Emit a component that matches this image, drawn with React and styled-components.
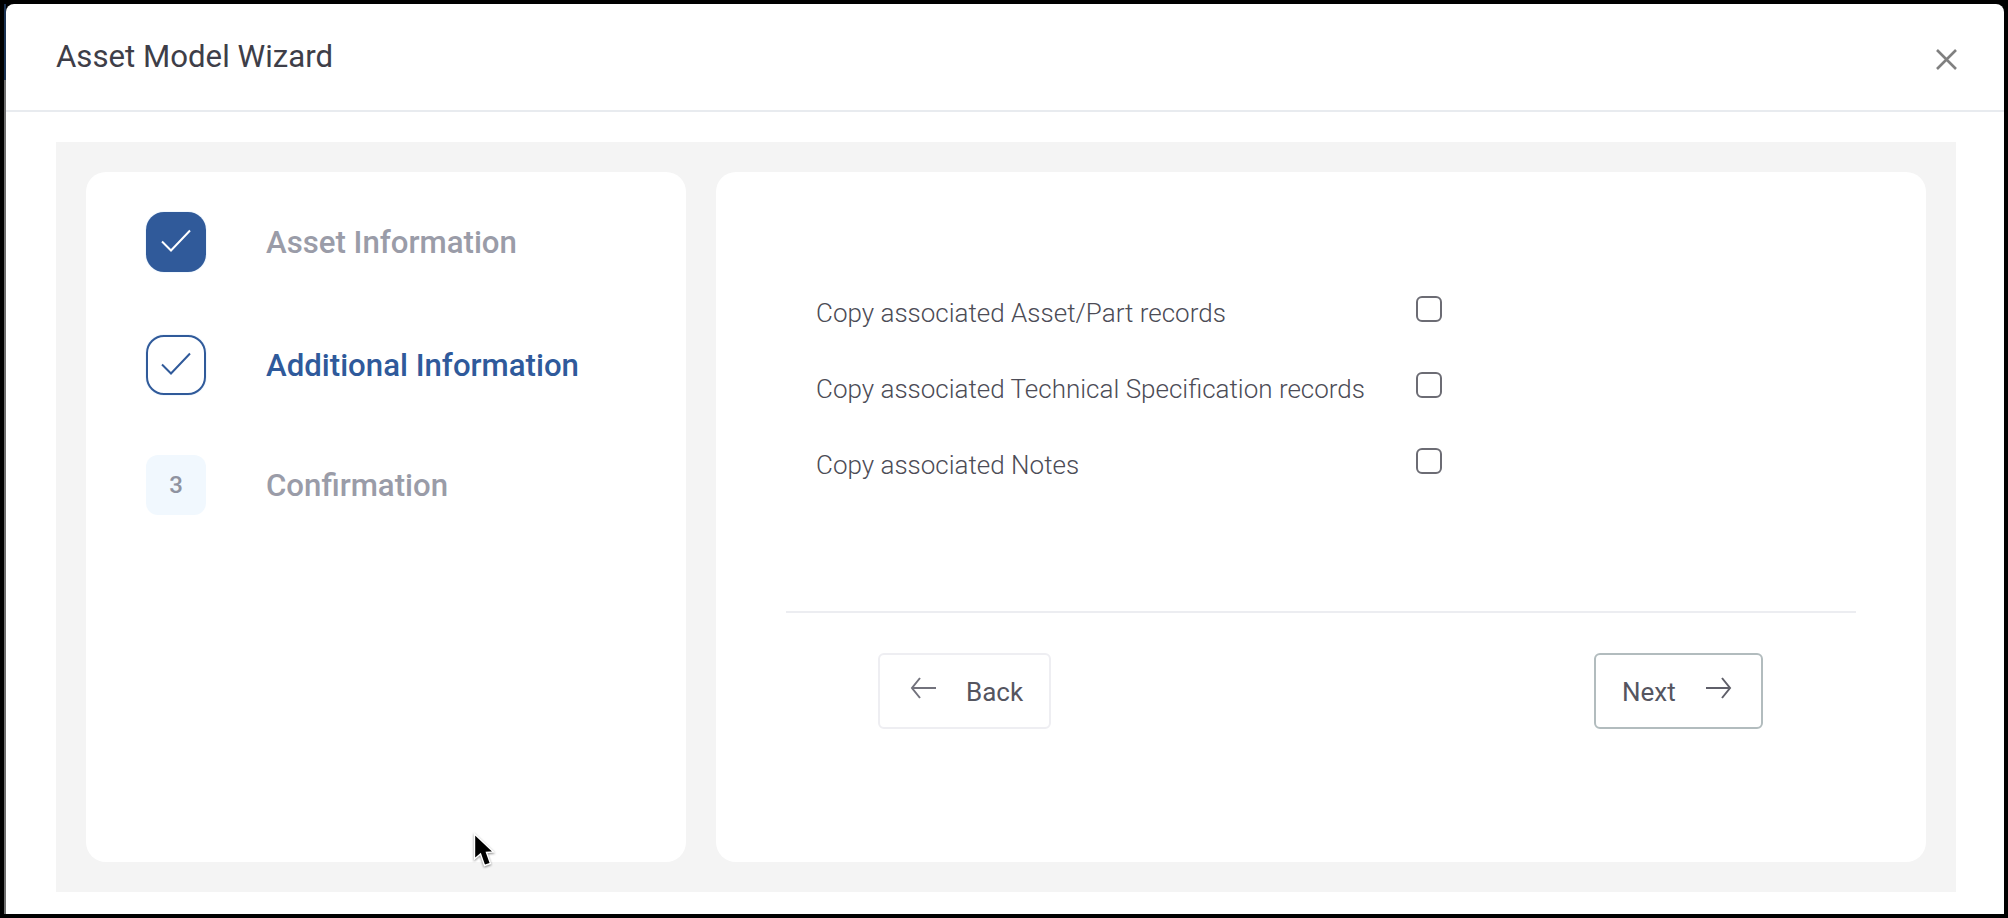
import React from 'react';
import styled, { createGlobalStyle } from 'styled-components';

const GlobalStyle = createGlobalStyle`
	html, body {
		margin: 0;
		padding: 0;
		background: #000;
	}
	body {
		font-family: Roboto, "Liberation Sans", sans-serif;
	}
`;

const Frame = styled.div`
	position: relative;
	box-sizing: border-box;
	width: 2008px;
	height: 918px;
	padding: 4px 4px 4px 6px;
	overflow: hidden;
	background:
		linear-gradient(#1c3353 76px, #6e6e6e 76px) 4px 4px / 2px 910px no-repeat,
		#000;
`;

const Modal = styled.div`
	display: flex;
	flex-direction: column;
	height: 910px;
	background: #fff;
	border-radius: 8px 8px 0 0;
`;

const Header = styled.header`
	display: flex;
	align-items: center;
	justify-content: space-between;
	box-sizing: border-box;
	height: 108px;
	padding: 0 47px 0 50px;
	border-bottom: 2px solid #e8ebef;
`;

const Title = styled.h1`
	margin: -2px 0 0;
	font-size: 31.2px;
	font-weight: 400;
	color: #3e3e48;
`;

const CloseIcon = styled.svg`
	display: block;
	width: 21px;
	height: 21px;
	margin-top: 5px;
	stroke: #808080;
	stroke-width: 2.6;
	fill: none;
`;

const Body = styled.div`
	flex: 1;
	display: flex;
	padding: 30px 48px 22px 50px;
`;

const Panel = styled.main`
	flex: 1;
	display: flex;
	gap: 30px;
	padding: 30px;
	background: #f4f4f4;
`;

const StepsCard = styled.aside`
	box-sizing: border-box;
	width: 600px;
	padding: 40px 0 0 60px;
	background: #fff;
	border-radius: 20px;
`;

const Step = styled.div`
	display: flex;
	align-items: center;
	gap: 60px;
	height: 60px;
	margin-bottom: ${p => p.$after}px;
`;

const StepBadge = styled.div`
	display: flex;
	align-items: center;
	justify-content: center;
	flex: none;
	box-sizing: border-box;
	width: 60px;
	height: 60px;
	border-radius: ${p => (p.$kind === 'todo' ? 12 : 18)}px;
	font-size: 24px;
	font-weight: 500;
	color: #8f93a0;
	background: ${p => (p.$kind === 'done' ? '#305a9a' : p.$kind === 'active' ? '#fff' : '#f1f8fe')};
	border: ${p => (p.$kind === 'active' ? '2px solid #305a9a' : 'none')};
	box-shadow: ${p => (p.$kind === 'todo' ? 'none' : '0 0 0 1px #f1f8fe')};
`;

const StepLabel = styled.span`
	font-size: 31.2px;
	font-weight: 500;
	color: ${p => (p.$active ? '#2f5a9b' : '#9a9ca8')};
`;

const CheckMark = styled.svg`
	display: block;
	width: 60px;
	height: 60px;
	flex: none;
	fill: none;
	stroke: ${p => p.$color};
	stroke-width: 2;
`;

const FormCard = styled.section`
	flex: 1;
	display: flex;
	flex-direction: column;
	background: #fff;
	border-radius: 20px;
`;

const Options = styled.div`
	display: flex;
	flex-direction: column;
	padding: 103px 0 0 100px;
`;

const OptionRow = styled.label`
	display: flex;
	align-items: center;
	height: 76px;
`;

const OptionText = styled.span`
	width: 600px;
	font-size: 26px;
	font-weight: 300;
	color: #4c4c56;
`;

const Checkbox = styled.input.attrs({ type: 'checkbox' })`
	appearance: none;
	box-sizing: border-box;
	width: 26px;
	height: 26px;
	margin: -8px 0 0;
	border: 2px solid #6c6c74;
	border-radius: 6px;
	background: #fff;
`;

const Divider = styled.hr`
	align-self: stretch;
	height: 2px;
	margin: 108px 70px 40px;
	border: none;
	background: #ecedf1;
`;

const Actions = styled.div`
	display: flex;
	justify-content: space-between;
	padding: 0 163px 0 162px;
`;

const ActionButton = styled.button`
	display: flex;
	align-items: center;
	box-sizing: border-box;
	width: ${p => p.$width}px;
	height: 76px;
	padding: 2px 0 0 ${p => p.$inset}px;
	gap: 30px;
	background: #fff;
	border: 2px solid ${p => p.$border};
	border-radius: 6px;
	font-family: inherit;
	font-size: 26px;
	font-weight: 400;
	color: #55555f;
`;

const ArrowIcon = styled.svg`
	display: block;
	flex: none;
	width: 26px;
	height: 22px;
	margin-top: -8px;
	fill: none;
	stroke: ${p => p.$color};
	stroke-width: 2;
`;

const Pointer = styled.svg`
	position: absolute;
	left: 472px;
	top: 832px;
	width: 24px;
	height: 38px;
	filter: drop-shadow(0 1px 1px rgba(0, 0, 0, 0.45));
`;

const steps = [
	{ label: 'Asset Information', kind: 'done', after: 63 },
	{ label: 'Additional Information', kind: 'active', after: 60 },
	{ label: 'Confirmation', kind: 'todo', after: 0 },
];

const options = [
	'Copy associated Asset/Part records',
	'Copy associated Technical Specification records',
	'Copy associated Notes',
];

const App = () => (
	<Frame>
		<GlobalStyle />
		<Modal>
			<Header>
				<Title>Asset Model Wizard</Title>
				<CloseIcon viewBox="0 0 21 21">
					<path d="M1 1 L20 20 M20 1 L1 20" />
				</CloseIcon>
			</Header>
			<Body>
				<Panel>
					<StepsCard>
						{steps.map((step, i) => (
							<Step key={step.label} $after={step.after}>
								<StepBadge $kind={step.kind}>
									{step.kind === 'todo' ? (
										i + 1
									) : (
										<CheckMark viewBox="0 0 60 60" $color={step.kind === 'done' ? '#fff' : '#305a9a'}>
											<path d="M16 29.5 L25 38.5 L44 18.5" />
										</CheckMark>
									)}
								</StepBadge>
								<StepLabel $active={step.kind === 'active'}>{step.label}</StepLabel>
							</Step>
						))}
					</StepsCard>
					<FormCard>
						<Options>
							{options.map(text => (
								<OptionRow key={text}>
									<OptionText>{text}</OptionText>
									<Checkbox />
								</OptionRow>
							))}
						</Options>
						<Divider />
						<Actions>
							<ActionButton $width={173} $inset={30} $border="#eeeef2">
								<ArrowIcon viewBox="0 0 26 22" $color="#72727c">
									<path d="M26 11 L2 11 M10 1 L2 11 L10 21" />
								</ArrowIcon>
								Back
							</ActionButton>
							<ActionButton $width={169} $inset={26} $border="#b2bcbe">
								Next
								<ArrowIcon viewBox="0 0 26 22" $color="#5f5f69">
									<path d="M0 11 L24 11 M16 1 L24 11 L16 21" />
								</ArrowIcon>
							</ActionButton>
						</Actions>
					</FormCard>
				</Panel>
			</Body>
		</Modal>
		<Pointer viewBox="0 0 24 38">
			<path
				d="M2.5 2 L2.5 27 L8.5 22 L12.5 33.5 L18.5 31.5 L14.5 20.5 L21.5 20 Z"
				fill="#000"
				stroke="#fff"
				strokeWidth="1.4"
			/>
		</Pointer>
	</Frame>
);

export default App;
